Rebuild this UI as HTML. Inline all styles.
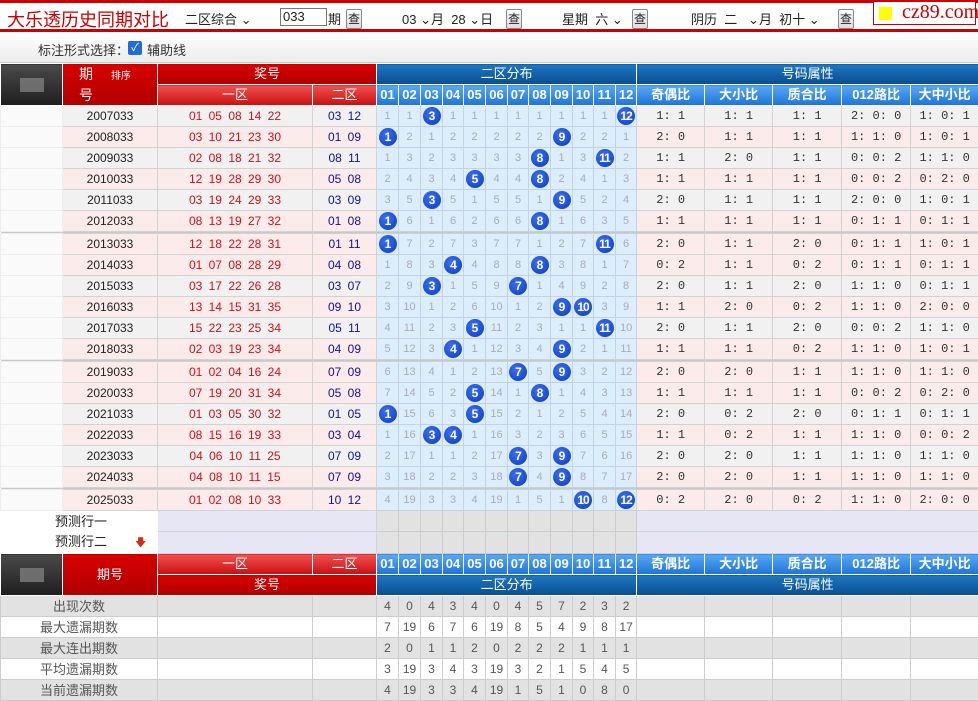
<!DOCTYPE html>
<html><head><meta charset="utf-8">
<style>
*{margin:0;padding:0;box-sizing:border-box}
body{width:978px;height:697px;overflow:hidden;background:#fff;font-family:"Liberation Sans","Noto Sans CJK SC",sans-serif;font-size:12px;color:#222}
.top{height:32px;border-top:3px solid #c00;border-bottom:3px solid #c00;position:relative;background:#fff}
.top .t{position:absolute;left:7px;top:3px;font-size:18px;color:#c00}
.top span{position:absolute;top:6px;font-size:13px;color:#222}
.btn{position:absolute;top:6px;width:16px;height:20px;border:1px solid #888;border-radius:2px;background:linear-gradient(#fafafa,#ddd);font-size:12px;text-align:center;line-height:18px}
.inp{position:absolute;left:280px;top:5px;width:47px;height:18px;border:1px solid #777;font-size:13px;padding-left:2px;line-height:16px}
.logo{position:absolute;left:873px;top:-2px;width:103px;height:24px;border:1px solid #c00;background:#fff;font-family:"Liberation Serif",serif;font-size:20px;color:#c00;line-height:20px;padding-left:28px}
.logo i{position:absolute;left:5px;top:5px;width:13px;height:13px;background:#ff0}
.bar2{height:31px;background:linear-gradient(#fff,#ececec);border-bottom:1px solid #ccc;position:relative}
.bar2 span{position:absolute;top:8px;font-size:13px;color:#333}
.cb{position:absolute;left:128px;top:9px;width:14px;height:14px;background:#1e6fd0;border-radius:2px;color:#fff;font-size:11px;text-align:center;line-height:14px}
table{border-collapse:collapse;table-layout:fixed;width:978px}
tr{height:21px}
td{height:21px;text-align:center;border:1px solid #d2d2d2;padding:0;white-space:nowrap;overflow:hidden;font-size:12px;line-height:19px}
.hr td{color:#fff;font-size:13px;border:1px solid #fff;line-height:18px}
.rd{background:linear-gradient(#d80000,#b00000)}
.rl{background:linear-gradient(#f45050,#c81010)}
.bk{background:linear-gradient(#4a4a4a,#1e1e1e)}
.bd{background:linear-gradient(#1d77c4,#0a4d8e)}
.bl{background:linear-gradient(#58a8f4,#1e74d8);font-weight:bold}
.ba{background:linear-gradient(#58a8f4,#1e74d8);font-weight:bold}
.blur{display:inline-block;width:24px;height:14px;background:#888;opacity:.7;vertical-align:middle}
tr.g td{background:#f1f1f1}
tr.p td{background:#fcebeb}
tr.r td:nth-child(1){background:#fafafa;border-color:#eee}
tr.r td:nth-child(3){color:#d0101a;word-spacing:3px}
tr.r td:nth-child(4){color:#1010a0;word-spacing:3px}
tr.r td:nth-child(n+5):nth-child(-n+16){background:#dcedfb;color:#aab;font-size:11px;border-color:#c5d3e0}
tr.r td:nth-child(n+17){font-family:"Liberation Mono",monospace;font-size:12px;color:#333}
b{display:inline-block;width:18px;height:18px;border-radius:50%;background:radial-gradient(circle at 40% 35%,#3a6ff0,#0b3bc0);color:#fff;font-size:12px;line-height:18px;font-weight:bold;vertical-align:middle;letter-spacing:-1px}
tr.sep{height:2px}
tr.sep td{height:2px;background:#c8c8c8;border:none;font-size:0;line-height:0}
tr.pr td{background:#e6e6f4;border-color:#d2d2e0}
tr.pr td.dg{background:#e2e2e2;border-color:#ccc}
tr.pr td.w{background:#fff;border-color:#fff;text-align:left;padding-left:54px;font-size:13px}
tr.s td{color:#555;font-size:12px;border-color:#ccc}
tr.s.a td{background:#e2e2e2}
tr.s.c td{background:#fff}
tr.s td.l{font-size:13px;color:#555}
</style></head><body>
<div class="top">
<div class="t">大乐透历史同期对比</div>
<span style="left:185px">二区综合 ⌄</span>
<div class="inp">033</div>
<span style="left:328px">期</span><div class="btn" style="left:346px">查</div>
<span style="left:402px">03 ⌄月 &nbsp;28 ⌄日</span><div class="btn" style="left:506px">查</div>
<span style="left:562px">星期 &nbsp;六 ⌄</span><div class="btn" style="left:632px">查</div>
<span style="left:691px">阴历 &nbsp;二 &nbsp;&nbsp;⌄月 &nbsp;初十 ⌄</span><div class="btn" style="left:838px">查</div>
<div class="logo"><i></i>cz89.com</div>
</div>
<div class="bar2"><span style="left:38px">标注形式选择：</span><div class="cb">✓</div><span style="left:147px">辅助线</span></div>
<table>
<colgroup><col style="width:62px"><col style="width:95px"><col style="width:155px"><col style="width:64px">
<col style="width:22px"><col style="width:22px"><col style="width:22px"><col style="width:21px"><col style="width:22px"><col style="width:22px"><col style="width:21px"><col style="width:22px"><col style="width:22px"><col style="width:21px"><col style="width:22px"><col style="width:21px">
<col style="width:68px"><col style="width:68px"><col style="width:69px"><col style="width:69px"><col style="width:68px"></colgroup>
<tr class="hr"><td rowspan="2" class="bk"><span class="blur"></span></td><td rowspan="2" class="rd" style="text-align:left;padding-left:16px;line-height:19px;font-size:14px">期<span style="font-size:10px;margin-left:18px">排序</span><br>号</td><td colspan="2" class="rd">奖号</td><td colspan="12" class="bd">二区分布</td><td colspan="5" class="bd">号码属性</td></tr>
<tr class="hr"><td class="rl">一区</td><td class="rl">二区</td><td class="bl">01</td><td class="bl">02</td><td class="bl">03</td><td class="bl">04</td><td class="bl">05</td><td class="bl">06</td><td class="bl">07</td><td class="bl">08</td><td class="bl">09</td><td class="bl">10</td><td class="bl">11</td><td class="bl">12</td><td class="ba">奇偶比</td><td class="ba">大小比</td><td class="ba">质合比</td><td class="ba">012路比</td><td class="ba">大中小比</td></tr>
<tr class="r g"><td></td><td>2007033</td><td>01 05 08 14 22</td><td>03 12</td><td>1</td><td>1</td><td><b>3</b></td><td>1</td><td>1</td><td>1</td><td>1</td><td>1</td><td>1</td><td>1</td><td>1</td><td><b>12</b></td><td>1: 1</td><td>1: 1</td><td>1: 1</td><td>2: 0: 0</td><td>1: 0: 1</td></tr>
<tr class="r p"><td></td><td>2008033</td><td>03 10 21 23 30</td><td>01 09</td><td><b>1</b></td><td>2</td><td>1</td><td>2</td><td>2</td><td>2</td><td>2</td><td>2</td><td><b>9</b></td><td>2</td><td>2</td><td>1</td><td>2: 0</td><td>1: 1</td><td>1: 1</td><td>1: 1: 0</td><td>1: 0: 1</td></tr>
<tr class="r g"><td></td><td>2009033</td><td>02 08 18 21 32</td><td>08 11</td><td>1</td><td>3</td><td>2</td><td>3</td><td>3</td><td>3</td><td>3</td><td><b>8</b></td><td>1</td><td>3</td><td><b>11</b></td><td>2</td><td>1: 1</td><td>2: 0</td><td>1: 1</td><td>0: 0: 2</td><td>1: 1: 0</td></tr>
<tr class="r p"><td></td><td>2010033</td><td>12 19 28 29 30</td><td>05 08</td><td>2</td><td>4</td><td>3</td><td>4</td><td><b>5</b></td><td>4</td><td>4</td><td><b>8</b></td><td>2</td><td>4</td><td>1</td><td>3</td><td>1: 1</td><td>1: 1</td><td>1: 1</td><td>0: 0: 2</td><td>0: 2: 0</td></tr>
<tr class="r g"><td></td><td>2011033</td><td>03 19 24 29 33</td><td>03 09</td><td>3</td><td>5</td><td><b>3</b></td><td>5</td><td>1</td><td>5</td><td>5</td><td>1</td><td><b>9</b></td><td>5</td><td>2</td><td>4</td><td>2: 0</td><td>1: 1</td><td>1: 1</td><td>2: 0: 0</td><td>1: 0: 1</td></tr>
<tr class="r p"><td></td><td>2012033</td><td>08 13 19 27 32</td><td>01 08</td><td><b>1</b></td><td>6</td><td>1</td><td>6</td><td>2</td><td>6</td><td>6</td><td><b>8</b></td><td>1</td><td>6</td><td>3</td><td>5</td><td>1: 1</td><td>1: 1</td><td>1: 1</td><td>0: 1: 1</td><td>0: 1: 1</td></tr>
<tr class="sep"><td colspan="21"></td></tr>
<tr class="r p"><td></td><td>2013033</td><td>12 18 22 28 31</td><td>01 11</td><td><b>1</b></td><td>7</td><td>2</td><td>7</td><td>3</td><td>7</td><td>7</td><td>1</td><td>2</td><td>7</td><td><b>11</b></td><td>6</td><td>2: 0</td><td>1: 1</td><td>2: 0</td><td>0: 1: 1</td><td>1: 0: 1</td></tr>
<tr class="r p"><td></td><td>2014033</td><td>01 07 08 28 29</td><td>04 08</td><td>1</td><td>8</td><td>3</td><td><b>4</b></td><td>4</td><td>8</td><td>8</td><td><b>8</b></td><td>3</td><td>8</td><td>1</td><td>7</td><td>0: 2</td><td>1: 1</td><td>0: 2</td><td>0: 1: 1</td><td>0: 1: 1</td></tr>
<tr class="r g"><td></td><td>2015033</td><td>03 17 22 26 28</td><td>03 07</td><td>2</td><td>9</td><td><b>3</b></td><td>1</td><td>5</td><td>9</td><td><b>7</b></td><td>1</td><td>4</td><td>9</td><td>2</td><td>8</td><td>2: 0</td><td>1: 1</td><td>2: 0</td><td>1: 1: 0</td><td>0: 1: 1</td></tr>
<tr class="r p"><td></td><td>2016033</td><td>13 14 15 31 35</td><td>09 10</td><td>3</td><td>10</td><td>1</td><td>2</td><td>6</td><td>10</td><td>1</td><td>2</td><td><b>9</b></td><td><b>10</b></td><td>3</td><td>9</td><td>1: 1</td><td>2: 0</td><td>0: 2</td><td>1: 1: 0</td><td>2: 0: 0</td></tr>
<tr class="r g"><td></td><td>2017033</td><td>15 22 23 25 34</td><td>05 11</td><td>4</td><td>11</td><td>2</td><td>3</td><td><b>5</b></td><td>11</td><td>2</td><td>3</td><td>1</td><td>1</td><td><b>11</b></td><td>10</td><td>2: 0</td><td>1: 1</td><td>2: 0</td><td>0: 0: 2</td><td>1: 1: 0</td></tr>
<tr class="r p"><td></td><td>2018033</td><td>02 03 19 23 34</td><td>04 09</td><td>5</td><td>12</td><td>3</td><td><b>4</b></td><td>1</td><td>12</td><td>3</td><td>4</td><td><b>9</b></td><td>2</td><td>1</td><td>11</td><td>1: 1</td><td>1: 1</td><td>0: 2</td><td>1: 1: 0</td><td>1: 0: 1</td></tr>
<tr class="sep"><td colspan="21"></td></tr>
<tr class="r p"><td></td><td>2019033</td><td>01 02 04 16 24</td><td>07 09</td><td>6</td><td>13</td><td>4</td><td>1</td><td>2</td><td>13</td><td><b>7</b></td><td>5</td><td><b>9</b></td><td>3</td><td>2</td><td>12</td><td>2: 0</td><td>2: 0</td><td>1: 1</td><td>1: 1: 0</td><td>1: 1: 0</td></tr>
<tr class="r p"><td></td><td>2020033</td><td>07 19 20 31 34</td><td>05 08</td><td>7</td><td>14</td><td>5</td><td>2</td><td><b>5</b></td><td>14</td><td>1</td><td><b>8</b></td><td>1</td><td>4</td><td>3</td><td>13</td><td>1: 1</td><td>1: 1</td><td>1: 1</td><td>0: 0: 2</td><td>0: 2: 0</td></tr>
<tr class="r g"><td></td><td>2021033</td><td>01 03 05 30 32</td><td>01 05</td><td><b>1</b></td><td>15</td><td>6</td><td>3</td><td><b>5</b></td><td>15</td><td>2</td><td>1</td><td>2</td><td>5</td><td>4</td><td>14</td><td>2: 0</td><td>0: 2</td><td>2: 0</td><td>0: 1: 1</td><td>0: 1: 1</td></tr>
<tr class="r p"><td></td><td>2022033</td><td>08 15 16 19 33</td><td>03 04</td><td>1</td><td>16</td><td><b>3</b></td><td><b>4</b></td><td>1</td><td>16</td><td>3</td><td>2</td><td>3</td><td>6</td><td>5</td><td>15</td><td>1: 1</td><td>0: 2</td><td>1: 1</td><td>1: 1: 0</td><td>0: 0: 2</td></tr>
<tr class="r g"><td></td><td>2023033</td><td>04 06 10 11 25</td><td>07 09</td><td>2</td><td>17</td><td>1</td><td>1</td><td>2</td><td>17</td><td><b>7</b></td><td>3</td><td><b>9</b></td><td>7</td><td>6</td><td>16</td><td>2: 0</td><td>2: 0</td><td>1: 1</td><td>1: 1: 0</td><td>1: 1: 0</td></tr>
<tr class="r p"><td></td><td>2024033</td><td>04 08 10 11 15</td><td>07 09</td><td>3</td><td>18</td><td>2</td><td>2</td><td>3</td><td>18</td><td><b>7</b></td><td>4</td><td><b>9</b></td><td>8</td><td>7</td><td>17</td><td>2: 0</td><td>2: 0</td><td>1: 1</td><td>1: 1: 0</td><td>1: 1: 0</td></tr>
<tr class="sep"><td colspan="21"></td></tr>
<tr class="r p"><td></td><td>2025033</td><td>01 02 08 10 33</td><td>10 12</td><td>4</td><td>19</td><td>3</td><td>3</td><td>4</td><td>19</td><td>1</td><td>5</td><td>1</td><td><b>10</b></td><td>8</td><td><b>12</b></td><td>0: 2</td><td>2: 0</td><td>0: 2</td><td>1: 1: 0</td><td>2: 0: 0</td></tr>
<tr class="pr"><td colspan="2" class="w">预测行一</td><td colspan="2"></td><td class="dg"></td><td class="dg"></td><td class="dg"></td><td class="dg"></td><td class="dg"></td><td class="dg"></td><td class="dg"></td><td class="dg"></td><td class="dg"></td><td class="dg"></td><td class="dg"></td><td class="dg"></td><td colspan="5"></td></tr>
<tr class="pr"><td colspan="2" class="w">预测行二<span style="color:#d03010;margin-left:28px;font-size:11px">🡇</span></td><td colspan="2"></td><td class="dg"></td><td class="dg"></td><td class="dg"></td><td class="dg"></td><td class="dg"></td><td class="dg"></td><td class="dg"></td><td class="dg"></td><td class="dg"></td><td class="dg"></td><td class="dg"></td><td class="dg"></td><td colspan="5"></td></tr>
<tr class="hr"><td rowspan="2" class="bk"><span class="blur"></span></td><td rowspan="2" class="rd">期号</td><td class="rl">一区</td><td class="rl">二区</td><td class="bl">01</td><td class="bl">02</td><td class="bl">03</td><td class="bl">04</td><td class="bl">05</td><td class="bl">06</td><td class="bl">07</td><td class="bl">08</td><td class="bl">09</td><td class="bl">10</td><td class="bl">11</td><td class="bl">12</td><td class="ba">奇偶比</td><td class="ba">大小比</td><td class="ba">质合比</td><td class="ba">012路比</td><td class="ba">大中小比</td></tr>
<tr class="hr"><td colspan="2" class="rd">奖号</td><td colspan="12" class="bd">二区分布</td><td colspan="5" class="bd">号码属性</td></tr>
<tr class="s a"><td colspan="2" class="l">出现次数</td><td></td><td></td><td>4</td><td>0</td><td>4</td><td>3</td><td>4</td><td>0</td><td>4</td><td>5</td><td>7</td><td>2</td><td>3</td><td>2</td><td></td><td></td><td></td><td></td><td></td></tr>
<tr class="s c"><td colspan="2" class="l">最大遗漏期数</td><td></td><td></td><td>7</td><td>19</td><td>6</td><td>7</td><td>6</td><td>19</td><td>8</td><td>5</td><td>4</td><td>9</td><td>8</td><td>17</td><td></td><td></td><td></td><td></td><td></td></tr>
<tr class="s a"><td colspan="2" class="l">最大连出期数</td><td></td><td></td><td>2</td><td>0</td><td>1</td><td>1</td><td>2</td><td>0</td><td>2</td><td>2</td><td>2</td><td>1</td><td>1</td><td>1</td><td></td><td></td><td></td><td></td><td></td></tr>
<tr class="s c"><td colspan="2" class="l">平均遗漏期数</td><td></td><td></td><td>3</td><td>19</td><td>3</td><td>4</td><td>3</td><td>19</td><td>3</td><td>2</td><td>1</td><td>5</td><td>4</td><td>5</td><td></td><td></td><td></td><td></td><td></td></tr>
<tr class="s a"><td colspan="2" class="l">当前遗漏期数</td><td></td><td></td><td>4</td><td>19</td><td>3</td><td>3</td><td>4</td><td>19</td><td>1</td><td>5</td><td>1</td><td>0</td><td>8</td><td>0</td><td></td><td></td><td></td><td></td><td></td></tr>
</table>
</body></html>
